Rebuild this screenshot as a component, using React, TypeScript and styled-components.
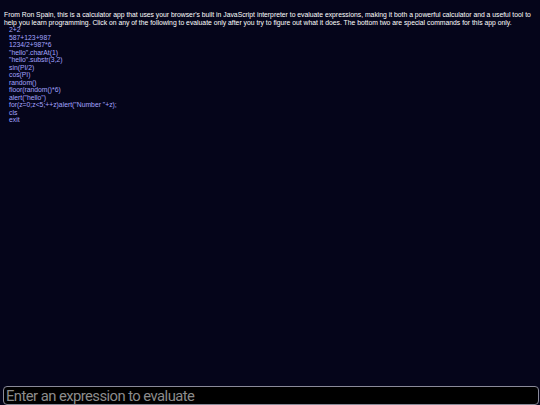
import React from "react";
import styled, { createGlobalStyle } from "styled-components";

const Global = createGlobalStyle`
  html, body { margin: 0; padding: 0; background: #05051a; }
  body { font-family: "Liberation Sans", Arial, sans-serif; }
`;

const Page = styled.div`
  height: 405px;
  display: flex;
  flex-direction: column;
  background: #05051a;
  overflow: hidden;
`;

const Content = styled.div`
  flex: 1;
  padding: 11px 4px 0 4px;
  color: #ffffff;
  font-size: 6.8px;
  line-height: 7.5px;
`;

const Intro = styled.div`
  color: #ffffff;
`;

const List = styled.div`
  display: flex;
  flex-direction: column;
  padding-left: 5px;
`;

const Item = styled.div`
  color: #a4a4ff;
  cursor: pointer;
`;

const InputRow = styled.div`
  padding: 0 1px 0 3px;
`;

const Input = styled.input`
  box-sizing: border-box;
  width: 100%;
  height: 19px;
  background: #000000;
  border: 1px solid #8a8a99;
  border-radius: 4px;
  color: #ffffff;
  font-family: Roboto, "Liberation Sans", sans-serif;
  font-size: 14.8px;
  letter-spacing: -0.55px;
  padding: 0 2px;
  outline: none;
  &::placeholder { color: #8c8c8c; }
`;

const items = [
  "2+2",
  "587+123+987",
  "1234/2+987*6",
  '"hello".charAt(1)',
  '"hello".substr(3,2)',
  "sin(PI/2)",
  "cos(PI)",
  "random()",
  "floor(random()*6)",
  'alert("hello")',
  'for(z=0;z<5;++z)alert("Number "+z);',
  "cls",
  "exit",
];

export default function App() {
  return (
    <>
      <Global />
      <Page>
        <Content>
          <Intro>
            From Ron Spain, this is a calculator app that uses your browser's built in JavaScript interpreter to evaluate expressions, making it both a powerful calculator and a useful tool to help you learn programming. Click on any of the following to evaluate only after you try to figure out what it does. The bottom two are special commands for this app only.
          </Intro>
          <List>
            {items.map((t) => (
              <Item key={t}>{t}</Item>
            ))}
          </List>
        </Content>
        <InputRow>
          <Input placeholder="Enter an expression to evaluate" />
        </InputRow>
      </Page>
    </>
  );
}
